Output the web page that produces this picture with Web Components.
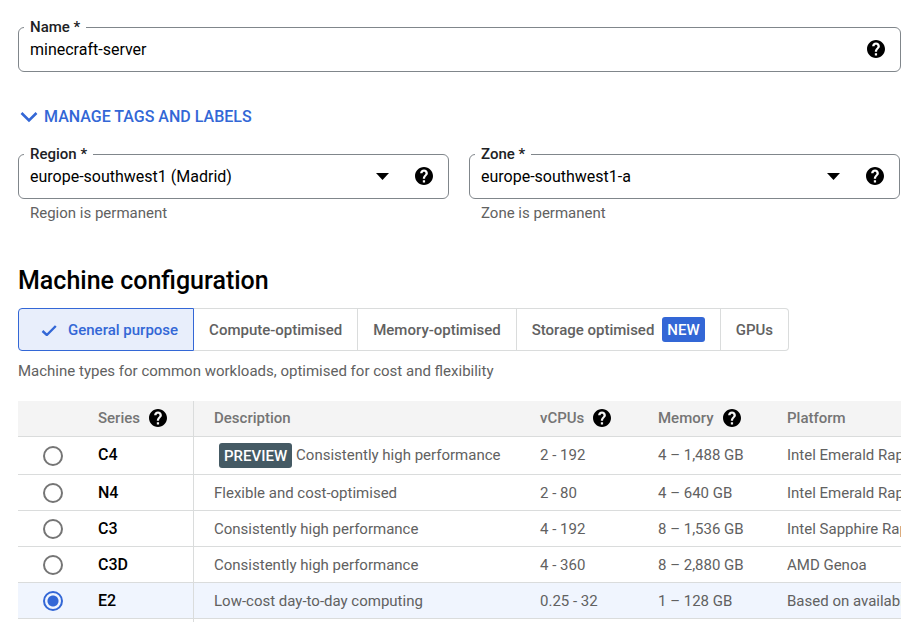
<!DOCTYPE html>
<html lang="en-GB">
<head>
<meta charset="utf-8">
<meta name="viewport" content="width=device-width, initial-scale=1">
<title>Machine configuration</title>
<style>
  body { margin: 0; background: #fff; color: #000; font: 400 15px/20px Roboto, sans-serif; }
</style>
</head>
<body>
<instance-form></instance-form>

<script>
const define = (name, html, setup) => {
  const template = document.createElement('template');
  template.innerHTML = html;
  customElements.define(name, class extends HTMLElement {
    constructor() {
      super();
      this.attachShadow({ mode: 'open' }).append(template.content.cloneNode(true));
    }
    connectedCallback() {
      if (setup && !this.ready) { this.ready = true; setup(this, this.shadowRoot); }
    }
  });
};

define('help-button', `
<style>
  :host { display: inline-flex; flex: none; }
  button { display: flex; padding: 0; border: 0; background: none; color: #000; cursor: pointer; }
  svg { width: 18px; height: 18px; fill: currentColor; }
</style>
<button type="button" aria-label="Help">
  <svg viewBox="2 2 20 20" aria-hidden="true"><path d="M12 2C6.48 2 2 6.48 2 12s4.48 10 10 10 10-4.48 10-10S17.52 2 12 2zm1.2 17.2h-2.5v-2.5h2.5v2.5zm2.1-7.9l-.9.92c-.8.78-1.2 1.38-1.2 2.88h-2.5v-.6c0-1.1.45-2.1 1.17-2.83l1.24-1.26c.37-.36.59-.86.59-1.41 0-.95-.7-1.7-1.7-1.7s-1.7.75-1.7 1.7H7.7c0-2.4 1.9-4.3 4.3-4.3s4.3 1.9 4.3 4.3c0 .9-.4 1.7-1 2.3z"/></svg>
</button>`);

const fieldStyle = `
  :host { display: block; min-width: 0; }
  fieldset { min-width: 0; margin: 0; padding: 0 15px 9px 5px; border: 1px solid #80868b; border-radius: 6px; }
  legend { padding: 0 6px; font-size: 15px; line-height: 18px; font-weight: 500; color: #202124; }
  .row { display: flex; align-items: center; height: 26px; padding-left: 6px; }
  input, select { flex: 1; min-width: 0; height: 26px; margin: 0; padding: 1px 0 0; border: 0; outline: 0; background: none;
    appearance: none; font: 400 16px/24px Roboto, sans-serif; color: #000; }
  .arrow { flex: none; width: 13px; height: 7px; margin-right: 26px; pointer-events: none; }
  .hint { margin: 0; padding: 4px 12px 0; line-height: 20px; color: #616161; }`;

define('text-field', `
<style>${fieldStyle}</style>
<fieldset>
  <legend><label for="control"></label></legend>
  <div class="row"><input id="control" type="text" required><help-button></help-button></div>
</fieldset>`, (host, root) => {
  root.querySelector('label').textContent = host.getAttribute('label') + ' *';
  root.querySelector('input').value = host.getAttribute('value');
});

define('select-field', `
<style>${fieldStyle}</style>
<fieldset>
  <legend><label for="control"></label></legend>
  <div class="row">
    <select id="control" required aria-describedby="hint"><option></option></select>
    <svg class="arrow" viewBox="0 0 13 7" aria-hidden="true"><path d="M0 0h13L6.5 7z"/></svg>
    <help-button></help-button>
  </div>
</fieldset>
<p class="hint" id="hint"><slot></slot></p>`, (host, root) => {
  root.querySelector('label').textContent = host.getAttribute('label') + ' *';
  root.querySelector('option').textContent = host.getAttribute('value');
});

define('expand-button', `
<style>
  :host { display: block; }
  button { display: flex; align-items: center; gap: 6px; padding: 0 2px; border: 0; background: none;
    color: #3367d6; font: 500 16px/24px Roboto, sans-serif; cursor: pointer; }
  svg { width: 18px; height: 12px; fill: none; stroke: currentColor; stroke-width: 2.6; }
</style>
<button type="button" aria-expanded="false">
  <svg viewBox="0 0 18 12" aria-hidden="true"><path d="M1.5 2L9 9.4 16.5 2"/></svg>
  <slot></slot>
</button>`);

define('tag-badge', `
<style>
  :host { display: inline-block; padding: 1px 5px 0; border-radius: 3px; color: #fff; background: #3367d6;
    font-weight: 500; line-height: 24px; }
  :host([tone="slate"]) { background: #455a64; }
</style>
<slot></slot>`);

define('segment-bar', `
<style>
  :host { display: flex; }
</style>
<slot></slot>`, host => host.setAttribute('role', 'group'));

define('segment-item', `
<style>
  :host { display: block; flex: none; }
  button { display: flex; align-items: center; height: 43px; padding: 0 15px; border: 1px solid #dadcdc; border-left-width: 0;
    background: #fff; color: #616161; font: 500 15px/20px Roboto, sans-serif; white-space: nowrap; cursor: pointer; }
  :host(:last-child) button { border-radius: 0 4px 4px 0; }
  :host([selected]) button { padding-left: 22px; border: 1px solid #3367d6; border-radius: 4px 0 0 4px; background: #e8eefb; color: #3367d6; }
  svg { display: none; width: 16px; height: 13px; margin-right: 11px; fill: none; stroke: currentColor; stroke-width: 2.4; }
  :host([selected]) svg { display: block; }
  ::slotted(tag-badge) { margin-left: 8px; }
</style>
<button type="button">
  <svg viewBox="0 0 16 13" aria-hidden="true"><path d="M1.5 8L5.8 12 14.8 3"/></svg>
  <slot></slot>
</button>`, (host, root) => {
  root.querySelector('button').setAttribute('aria-pressed', host.hasAttribute('selected'));
});

define('series-table', `
<style>
  :host { display: block; overflow: hidden; }
  table { width: 100%; min-width: 960px; table-layout: fixed; border-collapse: separate; border-spacing: 0; }
  .pick { width: 70px; } .series { width: 106px; } .description { width: 326px; }
  .vcpus { width: 118px; } .memory { width: 129px; }
  th, td { box-sizing: border-box; height: 36px; padding: 0 0 0 20px; border-bottom: 1px solid #dadcdc; text-align: left; vertical-align: middle;
    white-space: nowrap; font-weight: 400; color: #616161; }
  thead th, thead td { padding-bottom: 2px; background: #f4f4f4; color: #757575; font-weight: 500; }
  th div { display: flex; align-items: center; gap: 9px; }
  tr > :first-child { padding: 0; text-align: center; }
  tr > :nth-child(2) { padding-left: 10px; border-right: 1px solid #dadcdc; }
  tbody th { color: #000; font-size: 16px; font-weight: 500; }
  tbody .tall > * { height: 38px; }
  tbody .tall > :not(:first-child) { padding-bottom: 2px; }
  tbody .on > * { background: #f0f5fe; }
  tfoot td { height: 3px; border-bottom: 0; }
  input { display: block; appearance: none; box-sizing: border-box; width: 20px; height: 20px; margin: 0 auto; border: 2px solid #757575; border-radius: 50%; background: #fff; }
  input:checked { border-color: #3367d6; background: radial-gradient(circle, #3367d6 5px, #f0f5fe 6px); }
  .tagged { display: flex; align-items: center; gap: 4px; padding: 2px 0 0 5px; }
  .tagged span { padding-bottom: 2px; }
</style>
<table>
  <colgroup><col class="pick"><col class="series"><col class="description"><col class="vcpus"><col class="memory"><col></colgroup>
  <thead><tr>
    <td></td>
    <th scope="col"><div>Series<help-button></help-button></div></th>
    <th scope="col">Description</th>
    <th scope="col"><div>vCPUs<help-button></help-button></div></th>
    <th scope="col"><div>Memory<help-button></help-button></div></th>
    <th scope="col">Platform</th>
  </tr></thead>
  <tbody></tbody>
  <tfoot><tr><td></td><td></td><td></td><td></td><td></td><td></td></tr></tfoot>
</table>`, (host, root) => {
  const series = [
    ['C4', 'Consistently high performance', '2 - 192', '4 – 1,488 GB', 'Intel Emerald Rapids', 'PREVIEW'],
    ['N4', 'Flexible and cost-optimised', '2 - 80', '4 – 640 GB', 'Intel Emerald Rapids'],
    ['C3', 'Consistently high performance', '4 - 192', '8 – 1,536 GB', 'Intel Sapphire Rapids'],
    ['C3D', 'Consistently high performance', '4 - 360', '8 – 2,880 GB', 'AMD Genoa'],
    ['E2', 'Low-cost day-to-day computing', '0.25 - 32', '1 – 128 GB', 'Based on availability']
  ];
  root.querySelector('tbody').innerHTML = series.map(([name, text, cpus, memory, platform, badge]) => `
    <tr class="${badge ? 'tall' : ''} ${name === 'E2' ? 'on' : ''}">
      <td><input type="radio" name="series" id="s-${name}" ${name === 'E2' ? 'checked' : ''}></td>
      <th scope="row"><label for="s-${name}">${name}</label></th>
      <td>${badge ? `<div class="tagged"><tag-badge tone="slate">${badge}</tag-badge><span>${text}</span></div>` : text}</td>
      <td>${cpus}</td><td>${memory}</td><td>${platform}</td>
    </tr>`).join('');
});

define('instance-form', `
<style>
  :host { display: block; padding: 18px 11px 0 18px; }
  expand-button { margin: 33px 0 16px; }
  .pair { display: grid; grid-template-columns: 1fr 1fr; gap: 20px; padding-right: 1px; }
  h2 { margin: 42px 0 12px; font-size: 25px; line-height: 31px; font-weight: 500; }
  .note { margin: 10px 0 20px; color: #616161; }
</style>
<text-field label="Name" value="minecraft-server"></text-field>
<expand-button>MANAGE TAGS AND LABELS</expand-button>
<div class="pair">
  <select-field label="Region" value="europe-southwest1 (Madrid)">Region is permanent</select-field>
  <select-field label="Zone" value="europe-southwest1-a">Zone is permanent</select-field>
</div>
<h2>Machine configuration</h2>
<segment-bar aria-label="Machine family">
  <segment-item selected>General purpose</segment-item>
  <segment-item>Compute-optimised</segment-item>
  <segment-item>Memory-optimised</segment-item>
  <segment-item>Storage optimised<tag-badge>NEW</tag-badge></segment-item>
  <segment-item>GPUs</segment-item>
</segment-bar>
<p class="note">Machine types for common workloads, optimised for cost and flexibility</p>
<series-table></series-table>`);
</script>
</body>
</html>
